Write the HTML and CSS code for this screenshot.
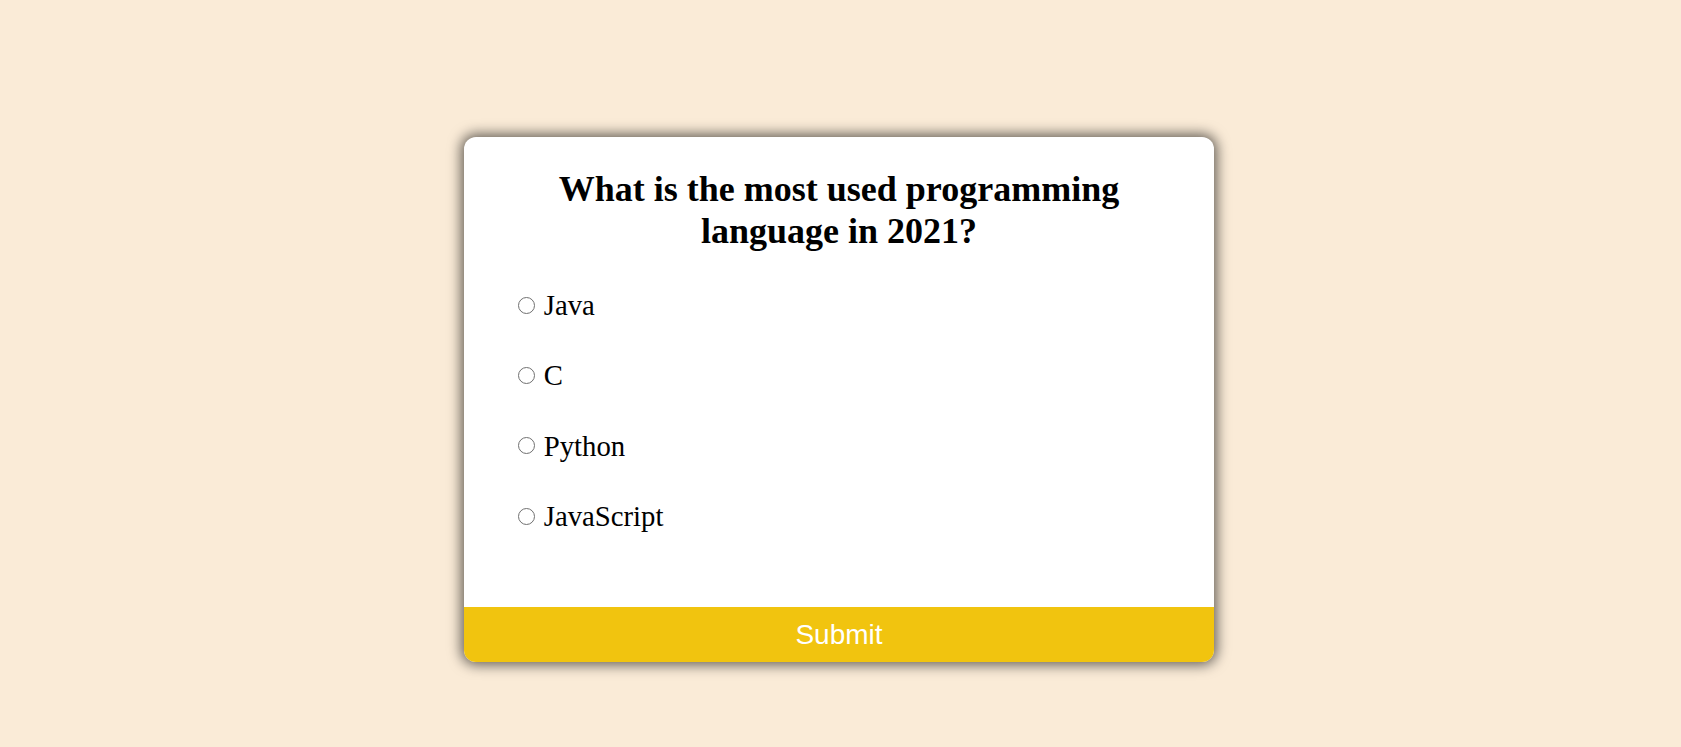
FILE: index.html
```html
<!DOCTYPE html>
<html lang="en">
<head>
<meta charset="utf-8">
<title>Quiz</title>
<link rel="stylesheet" href="styles.css">
</head>
<body>
<div class="quiz-container">
  <div class="quiz-header">
    <h2 class="question">What is the most used programming language in 2021?</h2>
    <ul class="answers">
      <li><input type="radio" name="answer" id="a" class="answer"> <label for="a">Java</label></li>
      <li><input type="radio" name="answer" id="b" class="answer"> <label for="b">C</label></li>
      <li><input type="radio" name="answer" id="c" class="answer"> <label for="c">Python</label></li>
      <li><input type="radio" name="answer" id="d" class="answer"> <label for="d">JavaScript</label></li>
    </ul>
  </div>
  <button class="submit">Submit</button>
</div>
</body>
</html>
```
FILE: styles.css
```css
html, body {
  margin: 0;
  padding: 0;
}
body {
  background: #faebd7;
  font-family: "Liberation Serif", "Times New Roman", serif;
  display: flex;
  justify-content: center;
  align-items: flex-start;
  padding: 137px 3px 0 0;
  min-height: 100vh;
  box-sizing: border-box;
}
.quiz-container {
  width: 750px;
  background: #fff;
  border-radius: 12px;
  box-shadow: 0 0 13px 3px rgba(0, 0, 0, 0.6);
  overflow: hidden;
}
.quiz-header {
  padding: 31px 46px 36.5px;
}
.question {
  margin: 0;
  padding: 0;
  text-align: center;
  font-size: 36px;
  font-weight: bold;
  color: #000;
}
.answers {
  list-style: none;
  margin: 0;
  padding: 37px 0 0;
}
.answers li {
  font-size: 28.75px;
  margin: 0 0 37.4px;
  color: #000;
}
.answer {
  -webkit-appearance: none;
  appearance: none;
  box-sizing: border-box;
  width: 17px;
  height: 17px;
  border: 1.7px solid #707070;
  border-radius: 50%;
  background: #fff;
  margin: 0 2px 1.5px 7.5px;
  vertical-align: baseline;
  cursor: pointer;
}
.answer:checked {
  background: radial-gradient(circle, #1a73e8 0 4px, #fff 4.5px);
  border-color: #1a73e8;
}
.submit {
  display: block;
  width: 100%;
  border: none;
  background: #f1c40f;
  color: #fff;
  font-family: "Liberation Sans", Arial, sans-serif;
  font-size: 28px;
  padding: 11.5px 0;
  cursor: pointer;
}
```
